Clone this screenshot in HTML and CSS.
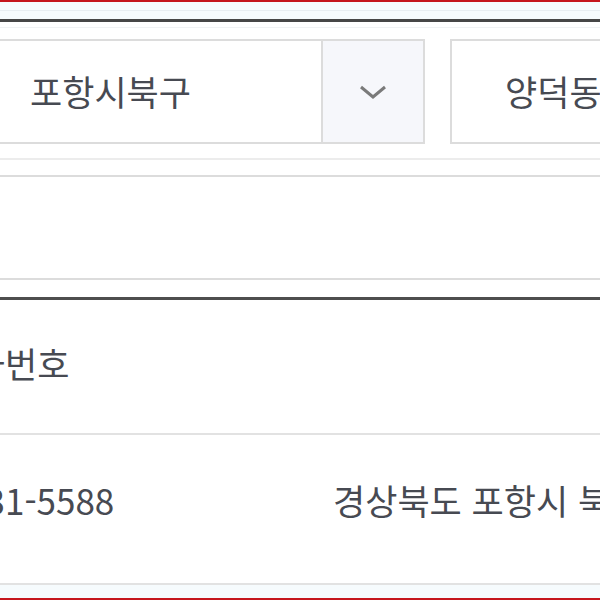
FILE: index.html
```html
<!DOCTYPE html>
<html lang="ko">
<head>
<meta charset="utf-8">
<title>매장 찾기</title>
<link rel="stylesheet" href="styles.css">
</head>
<body>
<div class="page">
  <div class="top-strip"><div class="top-inner"></div></div>
  <section class="search">
    <div class="sub-line"></div>
    <div class="select-row">
      <div class="select select-gu">
        <span class="select-value">포항시북구</span>
        <span class="select-btn">
          <svg width="28" height="16" viewBox="0 0 28 16"><path d="M2 3 L14 13 L26 3" fill="none" stroke="#7a7a7a" stroke-width="3"/></svg>
        </span>
      </div>
      <div class="select select-dong">
        <span class="select-value">양덕동</span>
      </div>
    </div>
    <div class="divider"></div>
    <div class="input-box"></div>
  </section>
  <div class="result">
    <div class="row row-head">
      <div class="col-tel">전화번호</div>
      <div class="col-addr"></div>
    </div>
    <div class="row row-body">
      <div class="col-tel">054-231-5588</div>
      <div class="col-addr">경상북도 포항시 북구 양덕동</div>
    </div>
  </div>
  <div class="bottom-strip"></div>
</div>
</body>
</html>
```

FILE: styles.css
```css
html, body {
  margin: 0;
  padding: 0;
  background: #ffffff;
  overflow: hidden;
}
body {
  width: 600px;
  height: 600px;
  font-family: "Noto Sans CJK KR", "Noto Sans", sans-serif;
  color: #474a52;
}
.page {
  margin-left: -20px;
  width: 660px;
}
.top-strip {
  height: 17px;
  border-top: 2px solid #c5161d;
  background: #f6fbfd;
}
.top-inner {
  height: 8px;
  border-bottom: 1px solid #e8eef2;
}
.search {
  border-top: 3px solid #474747;
  padding-bottom: 17px;
}
.sub-line {
  height: 5px;
  border-bottom: 1px solid #f0f2f4;
  margin-bottom: 11px;
}
.select-row {
  display: flex;
  gap: 25px;
  height: 105px;
}
.select {
  display: flex;
  align-items: center;
  border: 2px solid #dcdcdc;
  box-sizing: border-box;
  font-size: 35px;
  white-space: nowrap;
}
.select-gu {
  width: 445px;
}
.select-dong {
  flex: 1;
}
.select-value {
  flex: 1;
  padding-left: 48px;
  padding-bottom: 2px;
}
.select-dong .select-value {
  padding-left: 53px;
}
.select-btn {
  width: 100px;
  height: 100%;
  display: flex;
  align-items: center;
  justify-content: center;
  background: #f6f7fb;
  border-left: 2px solid #dcdcdc;
}
.divider {
  height: 2px;
  background: #ececec;
  margin: 14px 0 15px;
}
.input-box {
  height: 105px;
  border: 2px solid #dcdcdc;
  box-sizing: border-box;
}
.result {
  margin-left: -180px;
  width: 900px;
  border-top: 3px solid #4e4e4e;
  font-size: 35px;
  white-space: nowrap;
}
.row {
  display: flex;
  align-items: center;
  border-bottom: 2px solid #e2e2e2;
}
.row-head {
  height: 133px;
}
.row-head .col-tel {
  margin-bottom: 8px;
}
.row-body {
  height: 148px;
}
.row-body .col-tel,
.row-body .col-addr {
  margin-bottom: 20px;
}
.col-tel {
  width: 410px;
  text-align: center;
  flex: none;
}
.col-addr {
  padding-left: 123px;
}
.bottom-strip {
  height: 13px;
  background: #f6fbfd;
  border-bottom: 2px solid #c5161d;
}
```
